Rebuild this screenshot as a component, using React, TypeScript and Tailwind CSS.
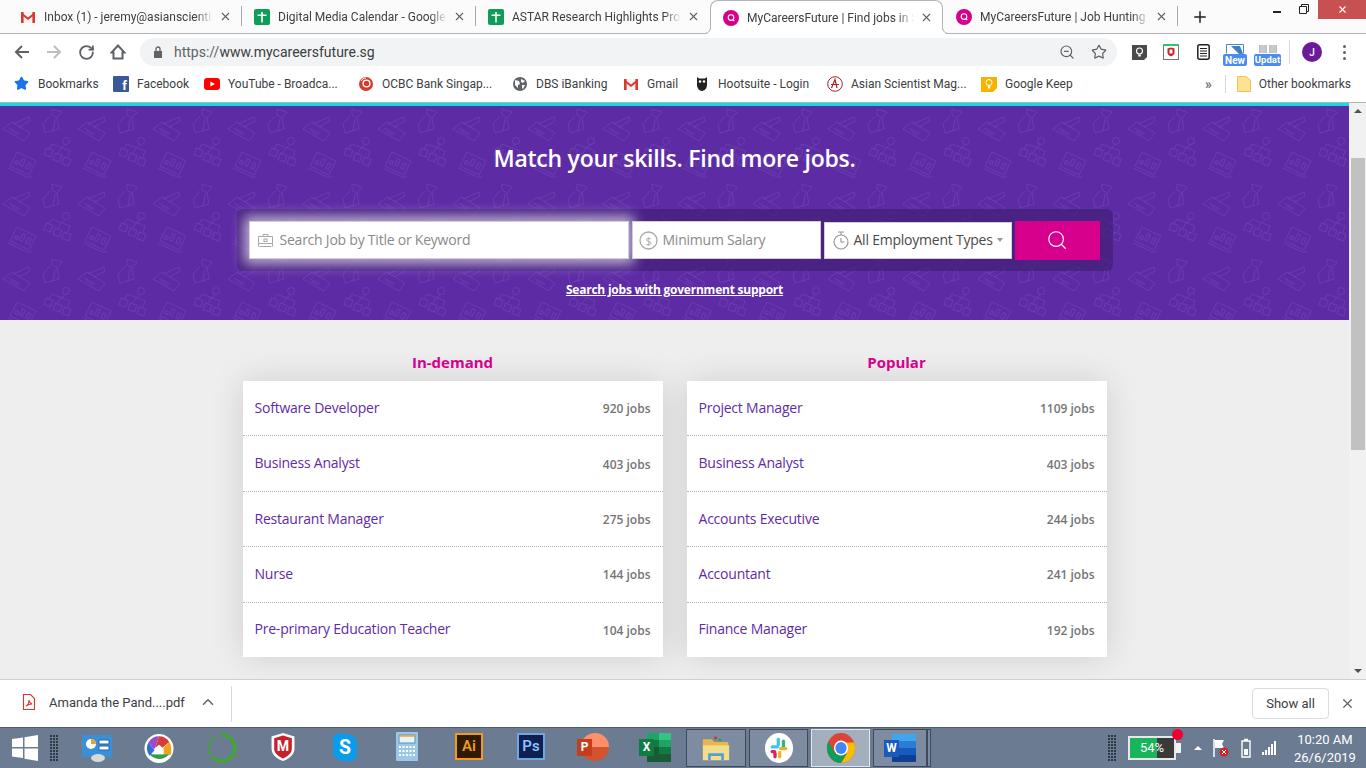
import { RotateCw, Star, X, Plus, ChevronUp, ZoomOut, Search } from "lucide-react";

const chrome = { fontFamily: 'Roboto, "Noto Sans", sans-serif' };

const GmailIcon = () => (
  <svg width="16" height="16" viewBox="0 0 16 16">
    <path d="M1 3h14v11H1z" fill="#f3f3f3" />
    <path d="M1 3l7 5.500L15 3v2.400L8 11 1 5.400z" fill="#d8392c" />
    <path d="M1 3h2.600v11H1zM12.400 3H15v11h-2.600z" fill="#d8392c" />
  </svg>
);

const SheetIcon = () => (
  <svg width="16" height="16" viewBox="0 0 16 16">
    <rect width="16" height="16" rx="2" fill="#0f9d58" />
    <path d="M3.500 5.500h3.700V3h1.600v2.500h3.700V7H8.800v6.500H7.200V7H3.500z" fill="#fff" />
  </svg>
);

const McfIcon = () => (
  <svg width="16" height="16" viewBox="0 0 16 16">
    <circle cx="8" cy="8" r="8" fill="#d6008c" />
    <circle cx="8" cy="7.600" r="2.800" fill="none" stroke="#fff" strokeWidth="1.100" />
    <path d="M9.800 9.600l1.400 1.400" stroke="#fff" strokeWidth="1.100" />
  </svg>
);

const Tab = ({ icon, title, active }: { icon: React.ReactNode; title: string; active?: boolean }) => (
  <div
    className={`relative flex w-[233px] shrink-0 items-center self-start pr-[9px] pl-3 ${
      active ? "h-[34px] rounded-t-[8px] border border-b-0 border-[#b4b4b4] bg-white" : "h-[33px]"
    }`}
  >
    {active && (
      <>
        <svg width="6" height="6" viewBox="0 0 6 6" className="absolute bottom-0 -left-[6px]" fill="#fff">
          <path d="M6 0v6H0c3 0 5-2 6-6z" />
          <path d="M5.500 0c-.5 3-2.500 5-5.500 5.500" fill="none" stroke="#b4b4b4" />
        </svg>
        <svg width="6" height="6" viewBox="0 0 6 6" className="absolute -right-[6px] bottom-0" fill="#fff">
          <path d="M0 0v6h6C3 6 1 4 0 0z" />
          <path d="M.5 0c.5 3 2.500 5 5.500 5.500" fill="none" stroke="#b4b4b4" />
        </svg>
      </>
    )}
    <span className="flex w-6 shrink-0">{icon}</span>
    <span className="min-w-0 flex-1 whitespace-nowrap text-[12px] text-[#3c4043] [mask-image:linear-gradient(to_right,black_90%,transparent)]">
      {title}
    </span>
    <X size={13} strokeWidth={2} className="ml-[6px] shrink-0 text-[#5f6368]" />
  </div>
);

const TabSep = () => <div className="mt-[6px] h-[20px] w-px shrink-0 self-start bg-[#a8a8a8]" />;

const TabBar = () => (
  <div className="relative flex h-[34px] shrink-0 items-start border-b border-[#b4b4b4] bg-[#fbfbfb] pl-2">
    <Tab icon={<GmailIcon />} title="Inbox (1) - jeremy@asianscientis" />
    <TabSep />
    <Tab icon={<SheetIcon />} title="Digital Media Calendar - Google" />
    <TabSep />
    <Tab icon={<SheetIcon />} title="ASTAR Research Highlights Proj" />
    <div className="w-px shrink-0" />
    <Tab icon={<McfIcon />} title="MyCareersFuture | Find jobs in S" active />
    <div className="w-px shrink-0" />
    <Tab icon={<McfIcon />} title="MyCareersFuture | Job Hunting T" />
    <TabSep />
    <Plus size={18} strokeWidth={2} className="mt-[8px] ml-[13px] text-[#202124]" />
    <div className="ml-auto flex h-[24px] items-start">
      <div className="mt-[11px] mr-[18px] h-[2px] w-[8px] bg-[#222]" />
      <svg width="10" height="10" viewBox="0 0 10 10" className="mt-[4px] mr-[9px]" fill="none" stroke="#222" strokeWidth="1">
        <path d="M.5 2.500h7v7h-7zM2.500 2.500V.5h7v7h-2" />
      </svg>
      <div className="flex h-[19px] w-[48px] items-center justify-center bg-[#c75050] text-white">
        <X size={11} strokeWidth={2.400} />
      </div>
    </div>
  </div>
);

const ExtensionIcons = () => (
  <div className="flex items-center">
    <svg width="15" height="15" viewBox="0 0 15 15" className="ml-[15px]">
      <path d="M0 0h15v12l-3 3H0z" fill="#4a4a4a" />
      <circle cx="7.500" cy="6" r="3" fill="none" stroke="#fff" strokeWidth="1.100" />
      <path d="M6.200 9.500h2.600v2H6.200z" fill="#fff" />
    </svg>
    <svg width="16" height="16" viewBox="0 0 16 16" className="ml-4">
      <rect x=".5" y="1.500" width="15" height="14" fill="#fff" stroke="#777" />
      <rect width="16" height="2" fill="#35c46b" />
      <path d="M4.500 4.500L8 3.500l3.500 1v4.500c0 1.500-1.800 2.800-3.500 3.500-1.700-.7-3.500-2-3.500-3.500z" fill="#c8202b" />
      <path d="M6.500 5.500h3v4h-3z" fill="#fff" />
    </svg>
    <svg width="13" height="16" viewBox="0 0 13 16" className="ml-[18px]" fill="none">
      <rect x=".8" y=".8" width="11.400" height="14.400" rx="2" stroke="#222" strokeWidth="1.500" />
      <path d="M3 4.500h7M3 7h7M3 9.500h7M3 12h7" stroke="#222" strokeWidth="1.200" />
    </svg>
    <div className="relative mt-[6px] ml-[13px] h-[22px] w-[24px]">
      <svg width="18" height="10" viewBox="0 0 18 10" className="ml-[3px]">
        <path d="M.5 9.500V.5h17v9" fill="#fff" stroke="#4a86c8" />
        <path d="M5 2h9l3 8h-4z" fill="#3f7fbf" />
      </svg>
      <span className="absolute bottom-0 left-0 flex h-[12px] w-[24px] items-center justify-center rounded-[2px] bg-[#4a8cf0] text-[10px] font-bold text-white">
        New
      </span>
    </div>
    <div className="relative mt-[6px] ml-[7px] h-[22px] w-[27px]">
      <svg width="18" height="9" viewBox="0 0 18 9" className="ml-[5px]">
        <path d="M0 1h8v8H0zM10 1h8v8h-8z" fill="#bbb" />
        <path d="M2 1v8M4 1v8M6 1v8M12 1v8M14 1v8M16 1v8" stroke="#e4e4e4" strokeWidth=".7" />
      </svg>
      <span className="absolute bottom-0 left-0 flex h-[12px] w-[27px] items-center justify-center rounded-[2px] bg-[#4a8cf0] text-[9.500px] font-bold text-white">
        Updat
      </span>
    </div>
    <div className="ml-[8px] h-[24px] w-px bg-[#d8d8d8]" />
    <div className="ml-[12px] flex h-5 w-5 items-center justify-center rounded-full bg-[#6a1b9a] text-[10px] font-medium text-white">J</div>
    <div className="ml-[21px] flex flex-col gap-[3px]">
      <span className="h-[3px] w-[3px] rounded-full bg-[#5f6368]" />
      <span className="h-[3px] w-[3px] rounded-full bg-[#5f6368]" />
      <span className="h-[3px] w-[3px] rounded-full bg-[#5f6368]" />
    </div>
  </div>
);

const NavCell = ({ children }: { children: React.ReactNode }) => (
  <div className="flex w-8 shrink-0 items-center justify-center text-[#5f6368]">{children}</div>
);

const Toolbar = () => (
  <div className="flex h-[36px] shrink-0 items-center bg-white pl-[6px]">
    <NavCell>
      <svg width="16" height="14" viewBox="0 0 16 14" fill="none" stroke="currentColor" strokeWidth="2">
        <path d="M15 7H2M8 1L2 7l6 6" />
      </svg>
    </NavCell>
    <NavCell>
      <svg width="16" height="14" viewBox="0 0 16 14" fill="none" stroke="#bcbec0" strokeWidth="2">
        <path d="M1 7h13M8 1l6 6-6 6" />
      </svg>
    </NavCell>
    <NavCell>
      <RotateCw size={17} strokeWidth={2.600} />
    </NavCell>
    <NavCell>
      <svg width="16" height="16" viewBox="0 0 16 16" fill="none" stroke="currentColor" strokeWidth="2">
        <path d="M8 1.500L1.500 8.500h2v6h9v-6h2z" />
      </svg>
    </NavCell>
    <div className="ml-[6px] flex h-[28px] w-[977px] items-center rounded-full bg-[#f1f3f4] pr-[10px]">
      <svg width="10" height="12" viewBox="0 0 10 12" className="ml-[13px]">
        <path d="M1 5h8v7H1z" fill="#5f6368" />
        <path d="M3 5V3a2 2 0 0 1 4 0v2" fill="none" stroke="#5f6368" strokeWidth="1.300" />
      </svg>
      <span className="ml-[11px] text-[14px] text-[#5f6368]">
        https://<span className="text-[#3c4043]">www.mycareersfuture.sg</span>
      </span>
      <ZoomOut size={16} strokeWidth={1.800} className="ml-auto text-[#5f6368]" />
      <Star size={16} strokeWidth={1.800} className="ml-[16px] text-[#5f6368]" />
    </div>
    <ExtensionIcons />
  </div>
);

const Mark = ({ color, text }: { color: string; text: string }) => (
  <span className="flex h-4 w-4 items-end justify-end rounded-[1px] pr-[2px] text-[13px] leading-none font-bold text-white" style={{ backgroundColor: color }}>
    {text}
  </span>
);

const bookmarks: { width: string; label: string; icon: React.ReactNode }[] = [
  { width: "w-[99px]", label: "Bookmarks", icon: <Star size={15} fill="#1a73e8" stroke="#1a73e8" /> },
  { width: "w-[91px]", label: "Facebook", icon: <Mark color="#3b5998" text="f" /> },
  {
    width: "w-[154px]",
    label: "YouTube - Broadca...",
    icon: (
      <svg width="16" height="16" viewBox="0 0 16 16">
        <rect y="2" width="16" height="12" rx="3" fill="#f00" />
        <path d="M6.400 5.400L11 8l-4.600 2.600z" fill="#fff" />
      </svg>
    ),
  },
  {
    width: "w-[154px]",
    label: "OCBC Bank Singap...",
    icon: (
      <svg width="16" height="16" viewBox="0 0 16 16" fill="none">
        <circle cx="8" cy="8" r="7" fill="#d8392c" />
        <circle cx="8.500" cy="7.500" r="3.400" stroke="#fff" strokeWidth="1.400" />
        <path d="M3 5c1-2 3-3 5-3" stroke="#fff" />
      </svg>
    ),
  },
  {
    width: "w-[111px]",
    label: "DBS iBanking",
    icon: (
      <svg width="16" height="16" viewBox="0 0 16 16">
        <circle cx="8" cy="8" r="7" fill="#5f6368" />
        <path d="M3 4l4 1 1 3-2 1v3L3 9zM9 3l4 2-2 2-2-1zM10 9l3 0-2 4-1-1z" fill="#fff" />
      </svg>
    ),
  },
  { width: "w-[71px]", label: "Gmail", icon: <GmailIcon /> },
  {
    width: "w-[133px]",
    label: "Hootsuite - Login",
    icon: (
      <svg width="16" height="16" viewBox="0 0 16 16">
        <path d="M3 1l2 1.500h6L13 1v8c0 3-2.500 6-5 6s-5-3-5-6z" fill="#222" />
        <circle cx="6" cy="5.500" r="1.300" fill="#fff" />
        <circle cx="10" cy="5.500" r="1.300" fill="#fff" />
      </svg>
    ),
  },
  {
    width: "w-[154px]",
    label: "Asian Scientist Mag...",
    icon: (
      <svg width="16" height="16" viewBox="0 0 16 16" fill="none" stroke="#a8242b">
        <circle cx="8" cy="8" r="7.300" />
        <path d="M4.500 12L8 3.500l2 8.500M4 8.500h8" strokeWidth="1.200" />
      </svg>
    ),
  },
  {
    width: "w-[100px]",
    label: "Google Keep",
    icon: (
      <svg width="16" height="16" viewBox="0 0 16 16">
        <path d="M0 1h16v11l-4 4H0z" fill="#f4b400" />
        <circle cx="8" cy="6.500" r="3" fill="none" stroke="#fff" />
        <path d="M6.800 10h2.400v2.500H6.800z" fill="#fff" />
      </svg>
    ),
  },
];

const BookmarkBar = () => (
  <div className="flex h-[33px] shrink-0 items-center border-b border-[#b4b4b4] bg-white pb-[5px] pl-[14px] text-[12px] text-[#3c4043]">
    {bookmarks.map((b) => (
      <div key={b.label} className={`flex shrink-0 items-center ${b.width}`}>
        <span className="flex w-6 shrink-0">{b.icon}</span>
        <span className="whitespace-nowrap">{b.label}</span>
      </div>
    ))}
    <span className="ml-[124px] text-[14px] leading-none font-medium text-[#5f6368]">»</span>
    <div className="ml-[13px] h-[18px] w-px bg-[#d8d8d8]" />
    <svg width="14" height="16" viewBox="0 0 14 16" className="ml-[11px]">
      <path d="M.5.500h9l4 4v11H.5z" fill="#fde293" stroke="#e8c45e" />
    </svg>
    <span className="ml-2 whitespace-nowrap">Other bookmarks</span>
  </div>
);

const HeroPattern = () => (
  <svg className="pointer-events-none absolute inset-0 h-full w-full" aria-hidden="true">
    <defs>
      <pattern id="hero-tile" width="75" height="75" patternUnits="userSpaceOnUse">
        <g fill="none" stroke="#8560c0" strokeOpacity="0.3" strokeWidth="1" strokeLinejoin="round">
          {/* tie */}
          <path d="M52 3l10 3-5 6-5-3zM50 10l-7 8 2 9 14-4-2-11M55 13l-2 12" />
          {/* card with pen */}
          <path d="M3 23l9-7 18 11-6 8zM13 18l16-7 1 4-11 6M9 22l11 6M11 25l7 4" />
          {/* org chart */}
          <circle cx="66" cy="35" r="3.500" />
          <path d="M65 38.500l-3 3.500M52 38l18 7M52 38l-3 5M61 42l-3 5M70 45l-2 6" />
          <rect x="45" y="43" width="7" height="7" transform="rotate(20 48.500 46.500)" />
          <rect x="54" y="48" width="7" height="7" transform="rotate(20 57.500 51.500)" />
          <rect x="63" y="52" width="7" height="7" transform="rotate(20 66.500 55.500)" />
          {/* laptop */}
          <path d="M17 46l19 9-7 14-19-9zM8 62l19 9q3 1 5-1" />
          <rect x="15" y="55" width="3" height="3" transform="rotate(25 16.500 56.500)" />
          <rect x="21" y="53" width="3" height="7" transform="rotate(25 22.500 56.500)" />
          <rect x="27" y="57" width="3" height="6" transform="rotate(25 28.500 60)" />
        </g>
      </pattern>
    </defs>
    <rect width="100%" height="100%" fill="url(#hero-tile)" />
  </svg>
);

const SearchBox = () => (
  <div className="relative flex h-[62px] w-[876px] items-center rounded-[6px] bg-[#3c1c6e]/60 pl-3 text-[14px] tracking-[-0.23px] text-[#8a8a8a]">
    <div className="flex h-[38px] w-[380px] items-center border border-[#cfcfcf] bg-white pl-2 shadow-[0_0_12px_5px_rgba(255,255,255,0.65)]">
      <svg width="15" height="15" viewBox="0 0 15 15" fill="none" stroke="#a8a8a8" strokeWidth="1">
        <path d="M.5 3.500h14v7H.5zM1.500 13.500h12M.5 10.500v3M14.500 10.500v3M5 3.500v-2h5v2" />
        <rect x="6" y="6" width="3" height="2.500" />
      </svg>
      <span className="mb-[2px] ml-[7px]">Search Job by Title or Keyword</span>
    </div>
    <div className="ml-[3px] flex h-[38px] w-[189px] items-center border border-[#cfcfcf] bg-white pl-[6px]">
      <svg width="19" height="19" viewBox="0 0 19 19" fill="none" stroke="#a8a8a8">
        <circle cx="9.500" cy="9.500" r="8.500" strokeWidth="1.300" />
        <text x="9.500" y="13.500" textAnchor="middle" fontSize="11" fill="#a8a8a8" stroke="none">$</text>
      </svg>
      <span className="mb-[2px] ml-[5px]">Minimum Salary</span>
    </div>
    <div className="ml-[3px] flex h-[37px] w-[188px] items-center border border-[#cfcfcf] bg-white pl-2">
      <svg width="16" height="19" viewBox="0 0 16 19" fill="none" stroke="#999" strokeWidth="1.200">
        <circle cx="8" cy="11" r="7" />
        <path d="M5 1h6M8 1v3M8 7v4h3.500" />
      </svg>
      <span className="mb-[1px] ml-[5px] text-[#4a4a4a]">All Employment Types</span>
      <span className="ml-[4px] h-0 w-0 border-x-[3.500px] border-t-[4px] border-x-transparent border-t-[#999]" />
    </div>
    <div className="ml-[3px] flex h-[39px] w-[85px] items-center justify-center bg-[#d6008c] text-white">
      <Search size={22} strokeWidth={1.300} />
    </div>
  </div>
);

const Hero = () => (
  <section className="relative flex h-[214px] shrink-0 flex-col items-center bg-[#5d2ca5] pt-[34px]">
    <HeroPattern />
    <h1 className="relative text-[23px] leading-[36px] font-semibold tracking-[-0.25px] text-white">Match your skills. Find more jobs.</h1>
    <div className="mt-[33px]">
      <SearchBox />
    </div>
    <a className="relative mt-[10px] text-[12px] leading-[18px] font-bold tracking-[-0.23px] text-white underline">Search jobs with government support</a>
  </section>
);

type Job = { title: string; count: string };

const JobColumn = ({ heading, jobs }: { heading: string; jobs: Job[] }) => (
  <div className="w-[420px]">
    <h2 className="mb-[9px] text-center text-[15px] leading-[20px] font-bold text-[#d6008c]">{heading}</h2>
    <ul className="flex h-[276px] flex-col bg-white shadow-[0_0_32px_rgba(0,0,0,0.13)]">
      {jobs.map((job, i) => (
        <li
          key={job.title}
          className={`flex flex-1 items-center justify-between px-3 ${i < jobs.length - 1 ? "border-b border-dotted border-[#b5b5b5]" : ""}`}
        >
          <span className="mb-[2px] text-[14px] tracking-[-0.22px] text-[#5f2ca6]">{job.title}</span>
          <span className="mt-[2px] text-[12px] font-semibold text-[#757575]">{job.count} jobs</span>
        </li>
      ))}
    </ul>
  </div>
);

const inDemand: Job[] = [
  { title: "Software Developer", count: "920" },
  { title: "Business Analyst", count: "403" },
  { title: "Restaurant Manager", count: "275" },
  { title: "Nurse", count: "144" },
  { title: "Pre-primary Education Teacher", count: "104" },
];

const popular: Job[] = [
  { title: "Project Manager", count: "1109" },
  { title: "Business Analyst", count: "403" },
  { title: "Accounts Executive", count: "244" },
  { title: "Accountant", count: "241" },
  { title: "Finance Manager", count: "192" },
];

const Scrollbar = () => (
  <div className="flex w-[17px] shrink-0 flex-col items-center bg-[#f1f1f1]">
    <span className="mt-[6px] h-0 w-0 border-x-[4px] border-b-[4px] border-x-transparent border-b-[#505050]" />
    <div className="mt-[45px] h-[292px] w-[14px] bg-[#c1c1c1]" />
    <span className="mt-auto mb-[6px] h-0 w-0 border-x-[4px] border-t-[4px] border-x-transparent border-t-[#505050]" />
  </div>
);

const Page = () => (
  <div className="flex min-h-0 flex-1" style={{ fontFamily: '"Open Sans", sans-serif' }}>
    <main className="flex min-w-0 flex-1 flex-col overflow-hidden bg-[#eeeeee]">
      <div className="h-[3px] shrink-0 bg-[#12dcdc]" />
      <Hero />
      <div className="flex justify-center gap-6 pt-[32px]">
        <JobColumn heading="In-demand" jobs={inDemand} />
        <JobColumn heading="Popular" jobs={popular} />
      </div>
    </main>
    <Scrollbar />
  </div>
);

const DownloadBar = () => (
  <div className="flex h-[48px] shrink-0 items-center border-t border-[#cfcfcf] bg-white text-[13px] text-[#3c4043]">
    <svg width="14" height="16" viewBox="0 0 14 16" fill="none" stroke="#e8302a" strokeWidth="1.100" className="mb-[3px] ml-[22px]">
      <path d="M1.500.500h7l4 4v11h-11z" />
      <path d="M4 12c2-1 3-3.500 3-6 0 2 1 3 3 4-2 0-4 .5-6 2z" />
    </svg>
    <span className="mb-[2px] ml-[13px]">Amanda the Pand....pdf</span>
    <ChevronUp size={18} strokeWidth={2} className="mb-[3px] ml-[14px] text-[#5f6368]" />
    <div className="ml-[14px] h-[36px] w-px bg-[#d8d8d8]" />
    <div className="ml-auto flex h-[31px] w-[77px] items-center justify-center rounded-[4px] border border-[#dadce0]">Show all</div>
    <X size={15} strokeWidth={2} className="mr-[11px] ml-[11px] text-[#5f6368]" />
  </div>
);

const Grip = () => (
  <div className="grid grid-cols-3 gap-[1px]">
    {Array.from({ length: 27 }).map((_, i) => (
      <span key={i} className="h-[2px] w-[2px] bg-[#2f3a48]" />
    ))}
  </div>
);

const Cell = ({ children }: { children: React.ReactNode }) => (
  <div className="flex h-full w-[62px] shrink-0 items-center justify-center">{children}</div>
);

const Tile = ({ bg, border, fg, text }: { bg: string; border: string; fg: string; text: string }) => (
  <span
    className="mb-[3px] flex h-[27px] w-[28px] items-center justify-center border-2 text-[15px] font-semibold"
    style={{ backgroundColor: bg, borderColor: border, color: fg }}
  >
    {text}
  </span>
);

const Running = ({ children, active, width }: { children: React.ReactNode; active?: boolean; width: string }) => (
  <div
    className={`flex h-[38px] shrink-0 items-center justify-center border ${width} ${
      active ? "border-[#e2e8ef] bg-[#a4afbd]" : "border-[#3e4a5a] bg-[#7d8ca1]"
    }`}
  >
    {children}
  </div>
);

const Taskbar = () => (
  <div className="flex h-[41px] shrink-0 items-center border-t border-[#4f5d70] bg-[#6a7b92]" style={chrome}>
    <div className="flex w-[50px] shrink-0 justify-center">
      <svg width="26" height="26" viewBox="0 0 26 26" fill="#fff">
        <path d="M0 4l11-1.600V12H0zM12.500 2.200L26 0v12H12.500zM0 13.500h11v9.600L0 21.500zM12.500 13.500H26V26l-13.500-2.200z" />
      </svg>
    </div>
    <div className="flex w-2 shrink-0 justify-center">
      <Grip />
    </div>
    <div className="w-2 shrink-0" />
    <Cell>
      <svg width="30" height="27" viewBox="0 0 30 27">
        <rect width="30" height="22" rx="1" fill="#3a8fd6" />
        <circle cx="9" cy="9" r="5" fill="#fff" />
        <path d="M9 4a5 5 0 0 1 5 5H9z" fill="#f0a030" />
        <path d="M17 5h10v4H17zM17 11h10v4H17z" fill="#fff" stroke="#2565a8" />
        <ellipse cx="16" cy="23" rx="7" ry="4" fill="#d8d8d8" />
      </svg>
    </Cell>
    <Cell>
      <svg width="30" height="31" viewBox="0 0 32 32">
        <circle cx="16" cy="16" r="15.500" fill="#fff" />
        <path d="M16 3a13 13 0 0 0-11 6l6 9z" fill="#9c4bd0" />
        <path d="M16 3l-5 15h5L27 9a13 13 0 0 0-11-6z" fill="#d83b35" />
        <path d="M29 16a13 13 0 0 0-2-7l-7 7v6h9z" fill="#f2a11e" />
        <path d="M6 22a13 13 0 0 0 20 1l3-1H11z" fill="#2ea043" />
        <path d="M3 16a13 13 0 0 0 3 8l5-6-6-9a13 13 0 0 0-2 7z" fill="#2f6fd8" />
        <path d="M11 22v-6l5-4 5 4v6z" fill="#fff" />
      </svg>
    </Cell>
    <Cell>
      <svg width="32" height="32" viewBox="0 0 32 34" fill="none" stroke="#3fa92c">
        <path d="M16 3a14 14 0 1 1-8 25" strokeWidth="3.500" />
        <path d="M7 27a14 14 0 0 1 4-22" strokeWidth="3" strokeDasharray="2.500 2" />
      </svg>
    </Cell>
    <Cell>
      <svg width="28" height="30" viewBox="0 0 28 34" className="mb-[3px]">
        <path d="M14 1l13 4v14c0 7-7 12-13 14C8 31 1 26 1 19V5z" fill="#fff" />
        <path d="M14 4l10 3v12c0 5-5 9-10 11C9 28 4 24 4 19V7z" fill="#c8202b" />
        <text x="14" y="22" textAnchor="middle" fontSize="16" fontWeight="700" fill="#fff">M</text>
      </svg>
    </Cell>
    <Cell>
      <svg width="30" height="30" viewBox="0 0 30 34" className="mb-[3px]">
        <path d="M10 1c-5 0-9 4-9 9 0 2 .5 3 1 5-.5 2-1 4-1 6 0 7 6 12 13 12h6c5 0 9-4 9-8 0-2-.5-4-1-5 .5-2 1-3 1-6C29 7 23 2 16 2c-2 0-3 .5-6-1z" fill="#0a9cea" />
        <text x="15" y="25" textAnchor="middle" fontSize="22" fontWeight="700" fill="#fff">S</text>
      </svg>
    </Cell>
    <Cell>
      <svg width="22" height="29" viewBox="0 0 22 29" className="mb-[3px]">
        <rect width="22" height="29" rx="1" fill="#9cc8e8" />
        <rect x="3" y="3" width="16" height="8" fill="#e8f2fa" stroke="#5d8fb8" />
        <path d="M3 4h16" stroke="#f0a030" strokeWidth="1.500" />
        <path d="M3 15h16M3 19h16M3 23h16" stroke="#fff" strokeWidth="2" strokeDasharray="2 1.500" />
      </svg>
    </Cell>
    <Cell>
      <Tile bg="#2e1a05" border="#f29a1c" fg="#f29a1c" text="Ai" />
    </Cell>
    <Cell>
      <Tile bg="#0f1f52" border="#6fa8e0" fg="#8ac4ff" text="Ps" />
    </Cell>
    <Cell>
      <div className="relative mb-[2px] flex h-[29px] w-[32px] items-center justify-end">
        <span className="h-[28px] w-[28px] rounded-full bg-[linear-gradient(180deg,#ff8f6b_0_50%,#d35230_50%_100%)]" />
        <span className="absolute left-0 flex h-[17px] w-[15px] items-center justify-center bg-[#c43e1c] text-[12px] font-bold text-white">P</span>
      </div>
    </Cell>
    <Cell>
      <div className="relative mb-[2px] flex h-[29px] w-[32px] items-center justify-end">
        <span className="grid h-[29px] w-[24px] grid-cols-2 grid-rows-4">
          <span className="bg-[#21a366]" />
          <span className="bg-[#33c481]" />
          <span className="bg-[#107c41]" />
          <span className="bg-[#21a366]" />
          <span className="bg-[#185c37]" />
          <span className="bg-[#107c41]" />
          <span className="bg-[#185c37]" />
          <span className="bg-[#185c37]" />
        </span>
        <span className="absolute left-0 flex h-[17px] w-[15px] items-center justify-center bg-[#107c41] text-[12px] font-bold text-white">X</span>
      </div>
    </Cell>
    <div className="flex h-full items-center gap-[3px]">
      <Running width="w-[60px]">
        <svg width="32" height="28" viewBox="0 0 32 32">
          <path d="M1 6h10l3 3h16v6H1z" fill="#e8b84e" />
          <path d="M1 13h30v17H1z" fill="#f6dd8b" />
          <path d="M7 22h18v8h-3v-5H10v5H7z" fill="#4ba3dd" />
          <path d="M14 3h3v3h-3z" fill="#c8392c" />
          <path d="M19 5h3v3h-3z" fill="#2ea043" />
        </svg>
      </Running>
      <Running width="w-[59px]">
        <svg width="30" height="30" viewBox="0 0 30 32">
          <ellipse cx="15" cy="16" rx="15" ry="16" fill="#fff" />
          <rect x="12.500" y="5" width="3.500" height="9" rx="1.700" fill="#36c5f0" />
          <rect x="6" y="13" width="9" height="3.500" rx="1.700" fill="#36c5f0" />
          <rect x="18" y="7" width="3.500" height="9" rx="1.700" fill="#2eb67d" />
          <rect x="15" y="15" width="9" height="3.500" rx="1.700" fill="#ecb22e" />
          <rect x="14" y="19" width="3.500" height="8" rx="1.700" fill="#ecb22e" />
          <rect x="6" y="18" width="6" height="3.500" rx="1.700" fill="#e01e5a" />
          <rect x="9" y="20" width="3.500" height="7" rx="1.700" fill="#e01e5a" />
        </svg>
      </Running>
      <Running active width="w-[59px]">
        <svg width="30" height="30" viewBox="0 0 30 32">
          <ellipse cx="15" cy="16" rx="15" ry="16" fill="#db4437" />
          <path d="M15 32A15 16 0 0 0 30 16c0-2-.3-4-1-6H15l6 12z" fill="#fbbc05" />
          <path d="M1.500 9A15 16 0 0 0 15 32l6-10H9z" fill="#0f9d58" />
          <ellipse cx="15" cy="16" rx="7.500" ry="8" fill="#fff" />
          <ellipse cx="15" cy="16" rx="6" ry="6.500" fill="#4285f4" />
        </svg>
      </Running>
      <Running width="w-[54px]">
        <div className="relative flex h-[28px] w-[32px] items-center justify-end">
          <span className="flex h-[28px] w-[24px] flex-col">
            <span className="flex-1 bg-[#41a5ee]" />
            <span className="flex-1 bg-[#2b7cd3]" />
            <span className="flex-1 bg-[#185abd]" />
            <span className="flex-1 bg-[#103f91]" />
          </span>
          <span className="absolute left-0 flex h-[17px] w-[15px] items-center justify-center bg-[#185abd] text-[12px] font-bold text-white">W</span>
        </div>
      </Running>
    </div>
    <div className="h-[38px] w-[4px] border border-[#3e4a5a] bg-[#7d8ca1]" />
    <div className="ml-[177px] flex w-2 shrink-0 justify-center">
      <Grip />
    </div>
    <div className="relative ml-[12px] flex h-[24px] w-[48px] border-2 border-[#e8e8e8] bg-[#3a3a3a]">
      <span className="w-[27px] bg-[#19b55b]" />
      <span className="absolute inset-0 flex items-center justify-center text-[13px] text-white">54%</span>
      <span className="absolute top-[-9px] right-[-9px] h-[11px] w-[11px] rounded-full bg-[#f5002d]" />
    </div>
    <span className="h-[10px] w-[5px] bg-[#f2f2f2]" />
    <span className="ml-[13px] h-0 w-0 border-x-[4px] border-b-[4px] border-x-transparent border-b-white" />
    <svg width="16" height="20" viewBox="0 0 16 20" className="ml-[11px]">
      <path d="M1 1v18" stroke="#fff" strokeWidth="1.500" />
      <path d="M2 2h9l-2 4 2 4H2z" fill="#fff" />
      <circle cx="11" cy="14" r="4.500" fill="#d6232c" />
      <path d="M9 12l4 4M13 12l-4 4" stroke="#fff" />
    </svg>
    <svg width="10" height="20" viewBox="0 0 10 20" className="ml-[12px]" fill="none" stroke="#fff">
      <path d="M3 1.500h4M1 3h8v16H1z" strokeWidth="1.400" />
      <path d="M3 11h4v6H3z" fill="#fff" stroke="none" />
    </svg>
    <svg width="16" height="14" viewBox="0 0 16 14" className="ml-[10px]" fill="#fff">
      <path d="M1 11h2v3H1zM4 9h2v5H4zM7 6h2v8H7zM10 3h2v11h-2zM13 0h2v14h-2z" />
    </svg>
    <div className="ml-[17px] flex flex-col items-center text-[13px] leading-[22px] text-white">
      <span className="mt-[1px]">10:20 AM</span>
      <span className="-mt-[4px]">26/6/2019</span>
    </div>
  </div>
);

export default function App() {
  return (
    <div className="flex h-[768px] w-[1366px] flex-col overflow-hidden bg-white">
      <div className="flex shrink-0 flex-col" style={chrome}>
        <TabBar />
        <Toolbar />
        <BookmarkBar />
      </div>
      <Page />
      <div style={chrome}>
        <DownloadBar />
      </div>
      <Taskbar />
    </div>
  );
}
